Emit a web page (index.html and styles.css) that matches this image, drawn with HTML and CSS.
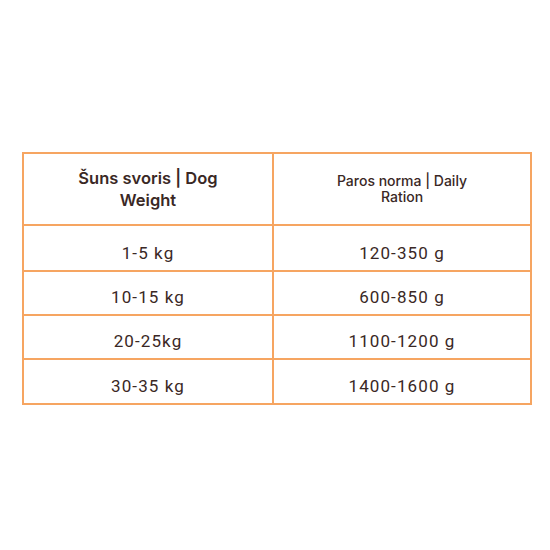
FILE: index.html
```html
<!DOCTYPE html>
<html>
<head>
<meta charset="utf-8">
<link rel="stylesheet" href="styles.css">
</head>
<body>
<div class="page">
  <table class="ration">
    <thead>
      <tr>
        <th class="head-weight">Šuns svoris | Dog<br>Weight</th>
        <th class="head-ration">Paros norma | Daily<br>Ration</th>
      </tr>
    </thead>
    <tbody>
      <tr class="r1"><td>1-5 kg</td><td>120-350 g</td></tr>
      <tr class="r2"><td>10-15 kg</td><td>600-850 g</td></tr>
      <tr class="r3"><td>20-25kg</td><td>1100-1200 g</td></tr>
      <tr class="r4"><td>30-35 kg</td><td>1400-1600 g</td></tr>
    </tbody>
  </table>
</div>
</body>
</html>
```

FILE: styles.css
```css
html, body {
  margin: 0;
  padding: 0;
  background: #ffffff;
}
.page {
  width: 550px;
  height: 550px;
  padding: 152px 0 0 22px;
  box-sizing: border-box;
}
.ration {
  border-collapse: collapse;
  width: 510px;
  table-layout: fixed;
  color: #3a2825;
}
.ration th,
.ration td {
  border: 2px solid #f6a561;
  text-align: center;
  vertical-align: middle;
  padding: 0;
}
.ration th:first-child,
.ration td:first-child {
  width: 248px;
}
thead tr {
  height: 72px;
}
.head-weight {
  font-family: Inter, "Noto Sans", sans-serif;
  font-weight: 600;
  font-size: 16.5px;
  line-height: 22px;
  padding-top: 2px;
}
.head-ration {
  font-family: Inter, "Noto Sans", sans-serif;
  font-weight: 500;
  font-size: 14px;
  line-height: 16px;
}
tbody td {
  font-family: Roboto, "Liberation Sans", sans-serif;
  font-size: 17px;
  line-height: 20px;
  letter-spacing: 1.1px;
  vertical-align: top;
}
tbody td::before {
  content: "";
  display: block;
  height: 8px;
}
.r1 td::before { height: 9px; }
.r1 { height: 46px; }
.r2 { height: 44px; }
.r3 { height: 44px; }
.r4 { height: 45px; }
```
